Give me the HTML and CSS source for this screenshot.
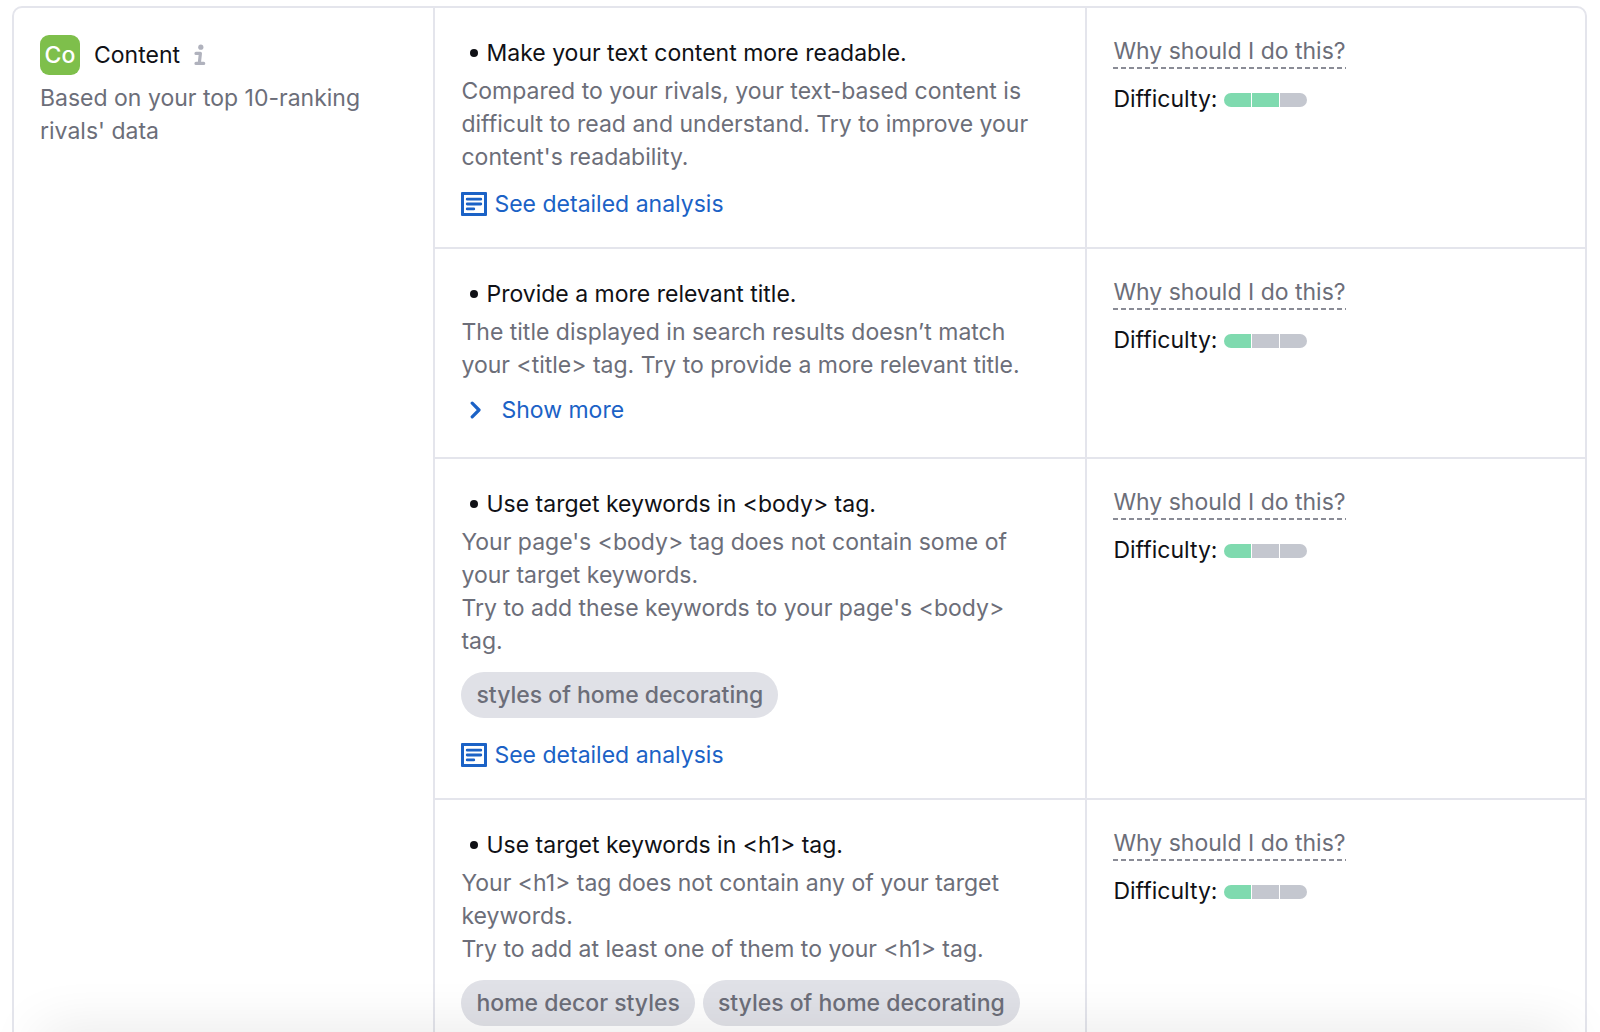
FILE: index.html
```
<!DOCTYPE html>
<html lang="en">
<head>
<meta charset="utf-8">
<meta name="viewport" content="width=device-width, initial-scale=1">
<title>Content ideas</title>
<link rel="stylesheet" href="styles.css">
</head>
<body>
<svg class="sprite" aria-hidden="true">
  <symbol id="icon-report" viewBox="0 0 26 24">
    <path fill-rule="evenodd" d="M1 0h24a1 1 0 0 1 1 1v22a1 1 0 0 1-1 1H1a1 1 0 0 1-1-1V1a1 1 0 0 1 1-1zm2 3v18h20V3z"/>
    <path d="M6.200 7.200h13.600M6.200 12h13.600M6.200 16.900h6.600" fill="none" stroke="currentColor" stroke-width="2.800" stroke-linecap="round"/>
  </symbol>
  <symbol id="icon-chevron" viewBox="0 0 12 18">
    <path d="M2.200 2.200 9 9l-6.800 6.800" fill="none" stroke="currentColor" stroke-width="3.200" stroke-linecap="round" stroke-linejoin="round"/>
  </symbol>
</svg>
<main class="page">
  <table class="ideas">
    <tbody>
      <tr>
        <th class="cell category" scope="rowgroup" rowspan="4">
          <div class="category-head">
            <span class="badge" aria-hidden="true">Co</span>
            <span class="category-name">Content</span>
            <button class="info" type="button" aria-label="About content ideas">
              <svg width="12" height="22" viewBox="0 0 12 22" aria-hidden="true">
                <circle cx="6.800" cy="3.200" r="2.600" fill="currentColor"/>
                <path d="M2 9.400h4.400L5.300 19.400M2 19.400h7.700" fill="none" stroke="currentColor" stroke-width="3.200" stroke-linecap="round" stroke-linejoin="round"/>
              </svg>
            </button>
          </div>
          <p class="text">Based on your top 10-ranking rivals' data</p>
        </th>
        <td class="cell idea">
          <h2 class="title">Make your text content more readable.</h2>
          <p class="text">Compared to your rivals, your text-based content is difficult to read and understand. Try to improve your content's readability.</p>
          <a class="report" href="#analysis"><svg width="26" height="24" aria-hidden="true"><use href="#icon-report"/></svg>See detailed analysis</a>
        </td>
        <td class="cell effort">
          <button class="why" type="button">Why should I do this?</button>
          <div class="difficulty">Difficulty: <span class="meter" role="img" aria-label="2 of 3"><i class="step on"></i><i class="step on"></i><i class="step"></i></span></div>
        </td>
      </tr>
      <tr>
        <td class="cell idea">
          <h2 class="title">Provide a more relevant title.</h2>
          <p class="text">The title displayed in search results doesn’t match your &lt;title&gt; tag. Try to provide a more relevant title.</p>
          <button class="more" type="button"><svg width="12" height="18" aria-hidden="true"><use href="#icon-chevron"/></svg>Show more</button>
        </td>
        <td class="cell effort">
          <button class="why" type="button">Why should I do this?</button>
          <div class="difficulty">Difficulty: <span class="meter" role="img" aria-label="1 of 3"><i class="step on"></i><i class="step"></i><i class="step"></i></span></div>
        </td>
      </tr>
      <tr>
        <td class="cell idea">
          <h2 class="title">Use target keywords in &lt;body&gt; tag.</h2>
          <p class="text">Your page's &lt;body&gt; tag does not contain some of your target keywords.<br>Try to add these keywords to your page's &lt;body&gt; tag.</p>
          <ul class="tags"><li class="tag">styles of home decorating</li></ul>
          <a class="report" href="#analysis"><svg width="26" height="24" aria-hidden="true"><use href="#icon-report"/></svg>See detailed analysis</a>
        </td>
        <td class="cell effort">
          <button class="why" type="button">Why should I do this?</button>
          <div class="difficulty">Difficulty: <span class="meter" role="img" aria-label="1 of 3"><i class="step on"></i><i class="step"></i><i class="step"></i></span></div>
        </td>
      </tr>
      <tr class="last">
        <td class="cell idea">
          <h2 class="title">Use target keywords in &lt;h1&gt; tag.</h2>
          <p class="text">Your &lt;h1&gt; tag does not contain any of your target keywords.<br>Try to add at least one of them to your &lt;h1&gt; tag.</p>
          <ul class="tags"><li class="tag">home decor styles</li><li class="tag">styles of home decorating</li></ul>
        </td>
        <td class="cell effort">
          <button class="why" type="button">Why should I do this?</button>
          <div class="difficulty">Difficulty: <span class="meter" role="img" aria-label="1 of 3"><i class="step on"></i><i class="step"></i><i class="step"></i></span></div>
        </td>
      </tr>
    </tbody>
  </table>
  <div class="fade"></div>
</main>
</body>
</html>
```
FILE: styles.css
```
* {
  box-sizing: border-box;
}

body {
  margin: 0;
  background: #fff;
  color: #101116;
  font-family: Inter, "Liberation Sans", sans-serif;
  font-size: 23px;
  line-height: 33px;
}

button {
  padding: 0;
  border: 0;
  background: none;
  color: inherit;
  font: inherit;
  cursor: pointer;
}

h2,
p,
ul {
  margin: 0;
  padding: 0;
}

.sprite {
  position: absolute;
  width: 0;
  height: 0;
}

.page {
  position: relative;
  height: 100vh;
  padding: 6px 13px 0 12px;
  overflow: hidden;
}

.ideas {
  width: 100%;
  table-layout: fixed;
  border: 2px solid #e4e5ec;
  border-radius: 10px;
  border-spacing: 0;
}

.cell {
  padding: 26px;
  vertical-align: top;
  text-align: left;
  font-weight: 400;
}

.category {
  width: 26.7%;
}

.idea {
  width: 41.5%;
  padding-top: 28px;
  padding-right: 48px;
  border-left: 2px solid #e4e5ec;
}

.effort {
  border-left: 2px solid #e4e5ec;
}

tr + tr .cell {
  border-top: 2px solid #e4e5ec;
}

.last .cell {
  padding-bottom: 80px;
}

.category-head {
  display: flex;
  align-items: center;
  height: 42px;
  margin-bottom: 6px;
}

.badge {
  width: 40px;
  height: 40px;
  margin-right: 14px;
  border-radius: 9px;
  background: #7ebf4b;
  color: #fff;
  font-weight: 500;
  line-height: 40px;
  text-align: center;
}

.info {
  display: flex;
  margin-left: 14px;
  color: #b0b2bd;
}

.title {
  display: flex;
  align-items: center;
  gap: 8px;
  padding-left: 9px;
  margin-bottom: 5px;
  font-size: 23px;
  font-weight: 400;
  line-height: 34px;
}

.title::before {
  content: "";
  width: 8px;
  height: 8px;
  border-radius: 50%;
  background: currentColor;
}

.text {
  color: #6c6e79;
}

.report,
.more {
  display: flex;
  align-items: center;
  width: fit-content;
  color: #1b62c6;
  line-height: 34px;
  text-decoration: none;
}

.report {
  gap: 7px;
  margin-top: 13px;
}

.report svg,
.more svg {
  fill: currentColor;
}

.more {
  gap: 19px;
  margin: 11px 0 4px;
  padding-left: 9px;
}

.tags {
  display: flex;
  gap: 8px;
  margin-top: 14px;
  list-style: none;
}

.tag {
  padding: 0 15px;
  border-radius: 23px;
  background: #e0e1e7;
  color: #6c6e79;
  font-weight: 500;
  line-height: 46px;
  white-space: nowrap;
}

.tags + .report {
  margin-top: 20px;
}

.why {
  display: block;
  height: 35px;
  margin-bottom: 14px;
  background: repeating-linear-gradient(90deg, #8a8c96 0 5px, transparent 5px 8px) left bottom / 100% 2px no-repeat;
  color: #6c6e79;
  line-height: 33px;
}

.difficulty {
  display: flex;
  align-items: center;
  gap: 7px;
}

.meter {
  display: flex;
  gap: 1px;
  border-radius: 7px;
  overflow: hidden;
}

.step {
  width: 27px;
  height: 14px;
  background: #c4c7cf;
}

.step.on {
  background: #7fdaaf;
}

.fade {
  position: absolute;
  right: 32px;
  bottom: -40px;
  left: 40px;
  height: 40px;
  box-shadow: 0 0 56px rgba(0, 0, 0, 0.11);
}
```
